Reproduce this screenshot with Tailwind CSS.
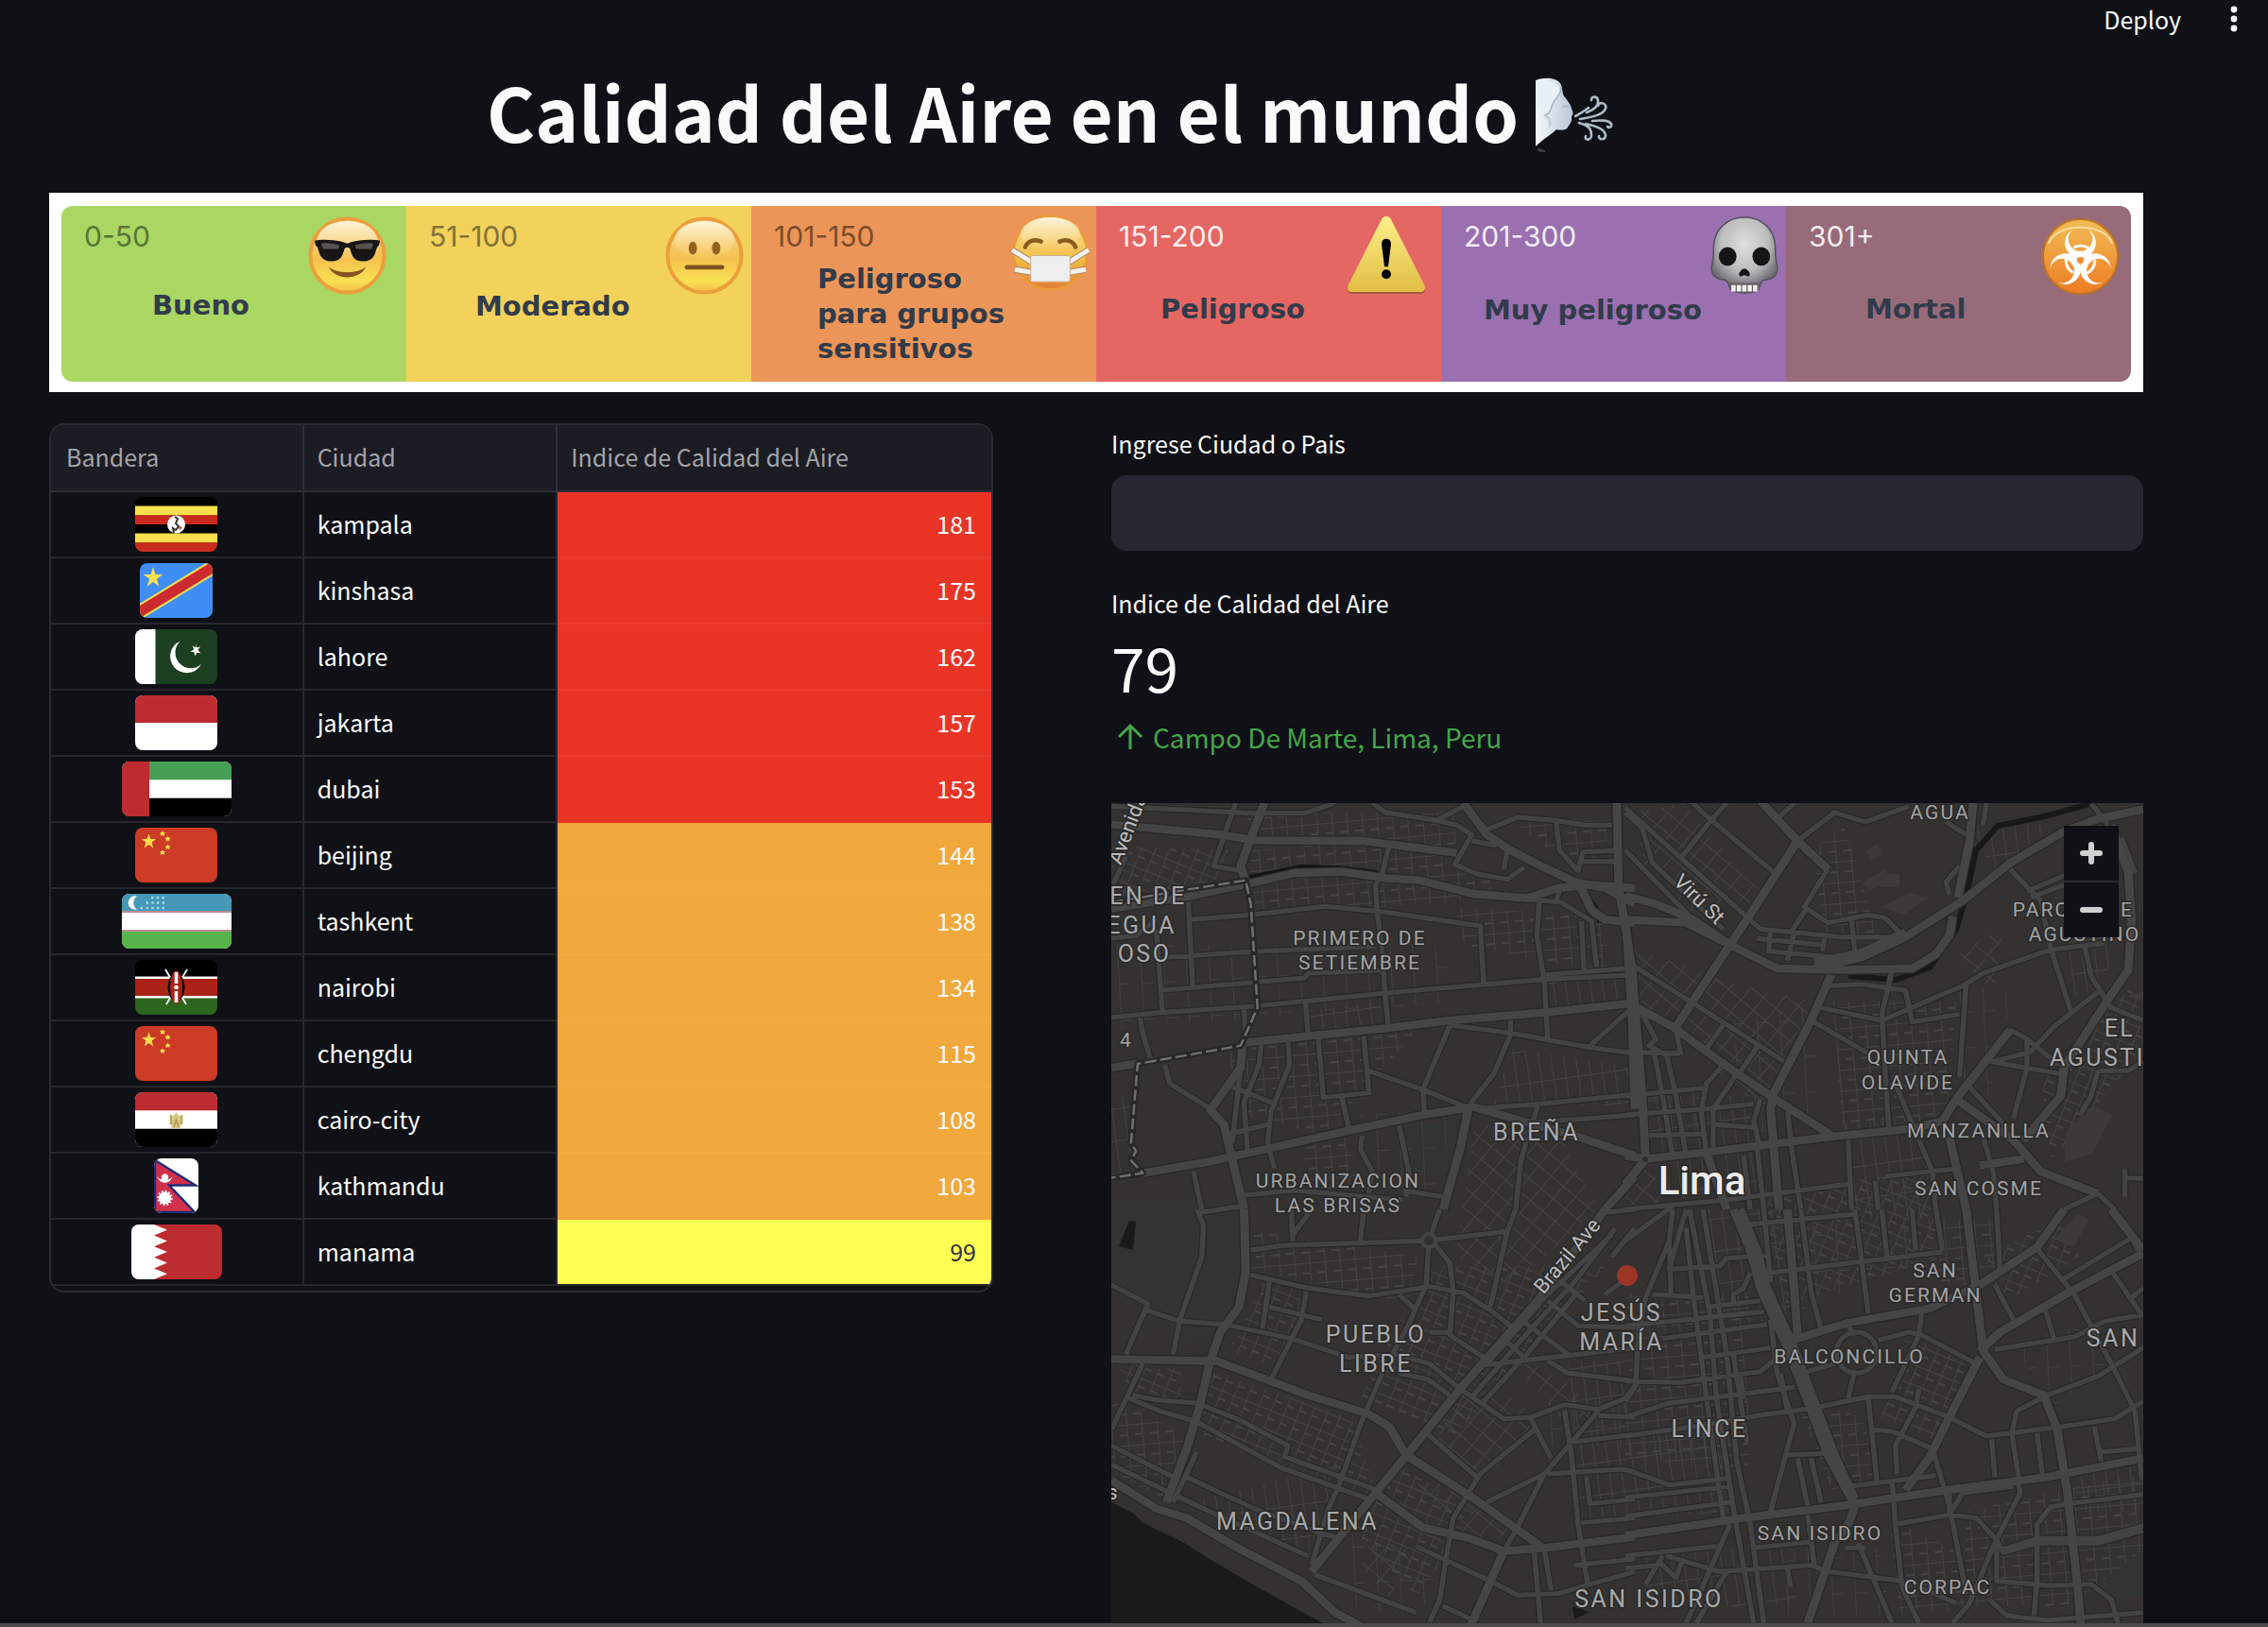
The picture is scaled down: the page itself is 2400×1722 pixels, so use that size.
<!DOCTYPE html>
<html lang="es">
<head>
<meta charset="utf-8">
<title>Calidad del Aire en el mundo</title>
<meta name="viewport" content="width=device-width, initial-scale=1">
<script src="https://cdn.jsdelivr.net/npm/@tailwindcss/browser@4"></script>
</head>
<body class="min-h-screen overflow-x-hidden border-b-4 border-[#4e494b] bg-[#0f1116] font-['Noto_Sans_CJK_SC','Noto_Sans',sans-serif] text-[25px] leading-[42px] text-[#fafafa]">

<header class="flex h-[42px] items-center justify-end gap-10 pr-5">
  <button type="button" class="pb-[3px]">Deploy</button>
  <button type="button" aria-label="Menú" class="flex w-8 justify-center">
    <svg class="h-8 w-2" viewBox="0 0 8 32" fill="#fafafa" aria-hidden="true"><circle cx="4" cy="5" r="3.4"/><circle cx="4" cy="15" r="3.4"/><circle cx="4" cy="25" r="3.4"/></svg>
  </button>
</header>

<main class="pl-[52px] pr-[132px]">
  <h1 class="flex h-[162px] items-center justify-center gap-[18px] pr-24 pb-3 text-[78px] leading-[110px] font-bold">
    <span>Calidad del Aire en el mundo</span>
    <svg class="mt-2 h-20 w-[84px]" viewBox="0 0 84 80" role="img" aria-label="Viento">
      <defs><linearGradient id="face" x1="0" x2="1"><stop offset="0" stop-color="#f4f8fc"/><stop offset="1" stop-color="#b9c6d4"/></linearGradient></defs>
      <path d="M0 4C10 0 24 1 27 9c2 6 1 10 4 13 3 4 6 7 7 12 2 4 2 6 0 8 1 6-2 8-4 12-2 3-8 3-12 2C16 62 8 66 0 74Z" fill="url(#face)"/>
      <path d="M0 5c14-4 25 2 26 11 0 8-8 9-10 16-2 6-3 8-6 10C5 38 4 34 0 34Z" fill="#e9eff6"/>
      <path d="M27 11c1 9-8 12-10 21-1 5-4 8-7 9 5 2 6 7 5 12M28 32c2-1 5-1 7 0" fill="none" stroke="#a9b6c4" stroke-width="1.600"/>
      <path d="M10 42c5 2 6 7 5 12" fill="none" stroke="#c4cfdb" stroke-width="2"/>
      <g fill="none" stroke="#aebcc8" stroke-width="2.600" stroke-linecap="round">
        <path d="M42 42c6-3 10-6 14-9M47 45c12-2 24-4 27-11 2-6-7-8-8-3"/>
        <path d="M54 38c8-3 13-7 12-13-1-5-8-4-7 0"/><path d="M46 49c10 3 13 6 13 13 0 6-8 6-6 1"/>
        <path d="M53 50c13 3 20 6 21 12 0 6-8 5-7 1"/><path d="M60 47c10-1 17-1 20 3 1 3-2 5-4 3"/>
      </g>
      <path d="M2 77l8 3" stroke="#3b4047" stroke-width="3"/>
    </svg>
  </h1>

  <section aria-label="Escala de calidad del aire" class="bg-white px-[13px] pt-[14px] pb-[11px] font-['DejaVu_Sans',sans-serif] text-[29px] leading-[37px] text-[#323b4a]">
    <ul class="grid h-[186px] grid-cols-6 overflow-hidden rounded-xl">
      <li class="relative bg-[#a9d762] pt-[75px] pl-24">
        <span class="absolute top-[14px] left-6 font-[Inter,sans-serif] text-[30px] text-[#5b7437]">0-50</span>
        <strong class="block pt-3">Bueno</strong>
        <svg class="absolute top-[11px] right-[21px] size-[83px]" viewBox="0 0 84 84" aria-hidden="true">
          <defs>
            <linearGradient id="em" x1="0" y1="0" x2="0" y2="1"><stop offset="0" stop-color="#f9dda0"/><stop offset=".55" stop-color="#f4c14d"/><stop offset=".85" stop-color="#f9e154"/><stop offset="1" stop-color="#f3bd45"/></linearGradient>
            <linearGradient id="gl" x1="0" y1="0" x2="0" y2="1"><stop offset="0" stop-color="#fff4dc"/><stop offset="1" stop-color="#f8d88a" stop-opacity=".1"/></linearGradient>
            <linearGradient id="sick" x1="0" y1="0" x2="0" y2="1"><stop offset="0" stop-color="#fbe3a4"/><stop offset=".6" stop-color="#f2bd43"/><stop offset="1" stop-color="#e27a31"/></linearGradient>
          </defs>
          <circle cx="42" cy="42" r="39.5" fill="url(#em)" stroke="#eb9e3c" stroke-width="4"/>
          <ellipse cx="42" cy="25" rx="32" ry="20" fill="url(#gl)"/>
          <path d="M7 26c10-2 24-1 35 3 11-4 25-5 35-3l-1 5c-2 1-3 4-4 8-2 7-8 10-15 9-7 0-10-5-12-13-1-2-5-2-6 0-2 8-5 13-12 13-7 1-13-2-15-9-1-4-2-7-4-8Z" fill="#171615"/>
          <path d="M14 29c7-1 14 0 20 2l-2 4H16ZM70 29c-7-1-14 0-20 2l2 4h16Z" fill="#555250"/>
          <path d="M22 54c8 8 32 8 40 0-6 15-34 15-40 0Z" fill="#885224"/>
        </svg>
      </li>
      <li class="relative bg-[#f2d25a] pt-[76px] pl-[73px]">
        <span class="absolute top-[14px] left-6 font-[Inter,sans-serif] text-[30px] text-[#83713a]">51-100</span>
        <strong class="block pt-3">Moderado</strong>
        <svg class="absolute top-[11px] right-2 size-[83px]" viewBox="0 0 84 84" aria-hidden="true">
          <circle cx="42" cy="42" r="39.5" fill="url(#em)" stroke="#eb9e3c" stroke-width="4"/>
          <ellipse cx="42" cy="25" rx="32" ry="20" fill="url(#gl)"/>
          <ellipse cx="29.500" cy="34" rx="4.500" ry="7" fill="#96611f"/><ellipse cx="54.500" cy="34" rx="4.500" ry="7" fill="#96611f"/>
          <rect x="21" y="52" width="42" height="5" rx="2" fill="#7d531d"/>
        </svg>
      </li>
      <li class="relative bg-[#ec9558] pt-[59px] pl-[70px]">
        <span class="absolute top-[14px] left-6 font-[Inter,sans-serif] text-[30px] text-[#7c4d2a]">101-150</span>
        <strong class="block">Peligroso<br>para grupos<br>sensitivos</strong>
        <svg class="absolute top-2 right-[7px] size-[83px]" viewBox="0 0 84 84" aria-hidden="true">
          <circle cx="42" cy="42" r="39.500" fill="url(#sick)" stroke="#eb9a3a" stroke-width="3"/>
          <ellipse cx="42" cy="22" rx="32" ry="18" fill="url(#gl)"/>
          <path d="M15 36c3-7 10-9 17-6M69 36c-3-7-10-9-17-6" fill="none" stroke="#8a5a20" stroke-width="4.500" stroke-linecap="round"/>
          <path d="M1 39l21 13M83 39L62 52M4 60l18 3M80 60l-18 3" stroke="#a98762" stroke-width="7"/>
          <path d="M1 39l21 13M83 39L62 52M4 60l18 3M80 60l-18 3" stroke="#f5f1ef" stroke-width="5"/>
          <rect x="21" y="45" width="42" height="28" rx="2" fill="#f0eff0" stroke="#cfae93"/>
        </svg>
      </li>
      <li class="relative bg-[#e56764] pt-[79px] pl-[68px]">
        <span class="absolute top-[14px] left-6 font-[Inter,sans-serif] text-[30px] text-[#fdeeee]">151-200</span>
        <strong class="block pt-3">Peligroso</strong>
        <svg class="absolute top-[11px] right-4 h-[83px] w-[84px]" viewBox="0 0 84 84" aria-hidden="true">
          <defs><linearGradient id="wr" x1="0" y1="0" x2="0" y2="1"><stop offset="0" stop-color="#fbf08a"/><stop offset="1" stop-color="#e2bd44"/></linearGradient></defs>
          <path d="M37 4c2-4 8-4 10 0l36 73c1 3 0 6-4 6H5c-4 0-5-3-4-6Z" fill="#a9563f"/>
          <path d="M37 3c2-4 8-4 10 0l36 71c1 4 0 7-4 7H5c-4 0-5-3-4-7Z" fill="url(#wr)"/>
          <path d="M42 24c4 0 5 3 5 6l-3 24h-4l-3-24c0-3 1-6 5-6Z"/><circle cx="42" cy="62" r="5"/>
        </svg>
      </li>
      <li class="relative bg-[#9a70b1] pt-20 pl-[45px]">
        <span class="absolute top-[14px] left-6 font-[Inter,sans-serif] text-[30px] text-[#f3edf7]">201-300</span>
        <strong class="block pt-3">Muy peligroso</strong>
        <svg class="absolute top-[11px] right-2 h-[83px] w-[72px]" viewBox="0 0 72 84" aria-hidden="true">
          <defs><radialGradient id="sk" cx=".5" cy=".35" r=".6"><stop offset="0" stop-color="#dedede"/><stop offset=".6" stop-color="#bdbdbd"/><stop offset="1" stop-color="#6b6870"/></radialGradient></defs>
          <path d="M36 1C55 1 68 14 69 32c0 8 0 14 2 21 1 7-2 12-8 14-6 1-9 1-10 6-1 6-7 9-17 9s-16-3-17-9c-1-5-4-5-10-6-6-2-9-7-8-14 2-7 2-13 2-21C4 14 17 1 36 1Z" fill="url(#sk)" stroke="#55525a" stroke-width="1.500"/>
          <ellipse cx="18" cy="43" rx="9.500" ry="10" fill="#151515"/><ellipse cx="54" cy="43" rx="9.500" ry="10" fill="#151515"/>
          <path d="M36 56c5 1 7 7 5 8-2 1-3-1-5-1s-3 2-5 1c-2-1 0-7 5-8Z" fill="#151515"/>
          <path d="M20 75h32" stroke="#66636a" stroke-width="8"/><path d="M22 77h28" stroke="#f4f3ee" stroke-width="7" stroke-dasharray="4.500 1.300"/>
        </svg>
      </li>
      <li class="relative bg-[#976b79] pt-[79px] pl-[84px]">
        <span class="absolute top-[14px] left-6 font-[Inter,sans-serif] text-[30px] text-[#f3ecee]">301+</span>
        <strong class="block pt-3">Mortal</strong>
        <svg class="absolute top-3 right-3 size-[83px]" viewBox="0 0 84 84" aria-hidden="true">
          <defs><linearGradient id="bio" x1="0" y1="0" x2="0" y2="1"><stop offset="0" stop-color="#f1bd56"/><stop offset="1" stop-color="#ee7b23"/></linearGradient></defs>
          <circle cx="42" cy="42" r="40" fill="url(#bio)" stroke="#bd7423" stroke-width="2"/>
          <path d="M8 28C16 5 68 5 76 28" fill="none" stroke="#f8e0a6" stroke-width="2"/>
          <g fill="#fff">
            <path id="arm" d="M34 13A16.500 16.500 0 1 0 50 13 13 13 0 1 1 34 13Z"/>
            <use href="#arm" transform="rotate(120 42 46)"/><use href="#arm" transform="rotate(240 42 46)"/>
          </g>
          <circle cx="42" cy="46" r="15.500" fill="none" stroke="#fff" stroke-width="3" stroke-dasharray="17 15.450" stroke-dashoffset="0"/>
          <circle cx="42" cy="46" r="3.500" fill="#ef8f33"/>
        </svg>
      </li>
    </ul>
  </section>

  <div class="mt-[33px] grid grid-cols-[999fr_1092fr] items-start gap-[125px]">
    <div class="overflow-hidden rounded-2xl border-2 border-[#2a2b31] pb-[5px]">
      <table class="w-full table-fixed border-collapse">
        <colgroup><col class="w-[26.8%]"><col class="w-[27%]"><col class="w-[46.2%]"></colgroup>
        <thead class="bg-[#1b1c24] text-left text-[#a3a4a8]">
          <tr class="h-[70px] border-b-2 border-[#2e3036]">
            <th scope="col" class="border-r-2 border-[#2e3036] pb-[3px] pl-4 font-normal">Bandera</th>
            <th scope="col" class="border-r-2 border-[#2e3036] pb-[3px] pl-[14px] font-normal">Ciudad</th>
            <th scope="col" class="pb-[3px] pl-[14px] font-normal">Indice de Calidad del Aire</th>
          </tr>
        </thead>
        <tbody>
          <tr class="h-[70px] border-b-2 border-[#26282e]">
            <td class="border-r-2 border-[#26282e]"><svg class="mx-auto h-[58px] w-[87px] rounded-lg" viewBox="0 0 87 58" role="img" aria-label="Uganda"><rect width="87" height="58" fill="#000"/><path d="M0 14.500h87M0 43.500h87" stroke="#f9df4e" stroke-width="10"/><path d="M0 24.200h87M0 53.200h87" stroke="#c92c1f" stroke-width="9.700"/><circle cx="43.500" cy="29" r="9.500" fill="#fff"/><path d="M42 21l3 2-2 5 3 3-3 4-3-2 1 5" stroke="#333" stroke-width="2" fill="none"/><path d="M46 31l4 1-3 3" fill="#c92c1f"/></svg></td>
            <td class="border-r-2 border-[#26282e] pb-[3px] pl-[14px]">kampala</td>
            <td class="border-b-2 border-[#eb3b2d] bg-[#ea3426] pr-4 pb-[3px] text-right">181</td>
          </tr>
          <tr class="h-[70px] border-b-2 border-[#26282e]">
            <td class="border-r-2 border-[#26282e]"><svg class="mx-auto h-[58px] w-[77px] rounded-lg" viewBox="0 0 77 58" role="img" aria-label="R. D. del Congo"><rect width="77" height="58" fill="#3f8ef7"/><path d="M-4 54L81 2" stroke="#f8e04d" stroke-width="15"/><path d="M-4 54L81 2" stroke="#cb2b2f" stroke-width="11"/><path d="M14 4l2.400 8h8l-6.500 4.700 2.500 8L14 20l-6.400 4.700 2.500-8L3.600 12h8Z" fill="#f8e04d"/></svg></td>
            <td class="border-r-2 border-[#26282e] pb-[3px] pl-[14px]">kinshasa</td>
            <td class="border-b-2 border-[#eb3b2d] bg-[#ea3426] pr-4 pb-[3px] text-right">175</td>
          </tr>
          <tr class="h-[70px] border-b-2 border-[#26282e]">
            <td class="border-r-2 border-[#26282e]"><svg class="mx-auto h-[58px] w-[87px] rounded-lg" viewBox="0 0 87 58" role="img" aria-label="Pakistán"><rect width="87" height="58" fill="#1b3f20"/><rect width="21.500" height="58" fill="#fff"/><path d="M48 12.500A17.500 17.500 0 1 0 70 37 16 16 0 0 1 48 12.500Z" fill="#fff"/><path d="M64 15.500l1 4 4-1-2.600 3.500 3 3.200-4-.5-2 3.500-1-4-4-.7 3.800-2-1.500-4 3.300 2Z" fill="#fff"/></svg></td>
            <td class="border-r-2 border-[#26282e] pb-[3px] pl-[14px]">lahore</td>
            <td class="border-b-2 border-[#eb3b2d] bg-[#ea3426] pr-4 pb-[3px] text-right">162</td>
          </tr>
          <tr class="h-[70px] border-b-2 border-[#26282e]">
            <td class="border-r-2 border-[#26282e]"><svg class="mx-auto h-[58px] w-[87px] rounded-lg" viewBox="0 0 87 58" role="img" aria-label="Indonesia"><rect width="87" height="58" fill="#fff"/><rect width="87" height="29" fill="#bd2c31"/></svg></td>
            <td class="border-r-2 border-[#26282e] pb-[3px] pl-[14px]">jakarta</td>
            <td class="border-b-2 border-[#eb3b2d] bg-[#ea3426] pr-4 pb-[3px] text-right">157</td>
          </tr>
          <tr class="h-[70px] border-b-2 border-[#26282e]">
            <td class="border-r-2 border-[#26282e]"><svg class="mx-auto h-[58px] w-[116px] rounded-lg" viewBox="0 0 116 58" role="img" aria-label="Emiratos Árabes Unidos"><rect width="116" height="58" fill="#fff"/><rect width="116" height="19.300" fill="#479e55"/><rect y="38.700" width="116" height="19.300"/><rect width="29" height="58" fill="#bd2c31"/></svg></td>
            <td class="border-r-2 border-[#26282e] pb-[3px] pl-[14px]">dubai</td>
            <td class="border-b-2 border-[#ea3426] bg-[#ea3426] pr-4 pb-[3px] text-right">153</td>
          </tr>
          <tr class="h-[70px] border-b-2 border-[#26282e]">
            <td class="border-r-2 border-[#26282e]"><svg class="mx-auto h-[58px] w-[87px] rounded-lg" viewBox="0 0 87 58" role="img" aria-label="China"><g id="china"><rect width="87" height="58" fill="#cc3b26"/><g fill="#f8dc4a"><path d="M14.500 6.500l2 5.500h5.700l-4.600 3.600 1.700 5.800-4.800-3.500-4.800 3.500 1.700-5.800L6.800 12h5.700Z"/><path d="M29 3.500l1 1.500 2 .3-1.200 1.400.2 2-2-.8-2 .8.200-2L26 5.300l2-.3ZM34.600 9l1 1.500 2 .3-1.200 1.400.2 2-2-.8-2 .8.200-2-1.200-1.400 2-.3ZM34.600 17.700l1 1.500 2 .3-1.200 1.400.2 2-2-.8-2 .8.200-2-1.200-1.400 2-.3ZM29 23.500l1 1.500 2 .3-1.200 1.400.2 2-2-.8-2 .8.200-2-1.200-1.400 2-.3Z"/></g></g></svg></td>
            <td class="border-r-2 border-[#26282e] pb-[3px] pl-[14px]">beijing</td>
            <td class="border-b-2 border-[#f1ac44] bg-[#f1a83c] pr-4 pb-[3px] text-right">144</td>
          </tr>
          <tr class="h-[70px] border-b-2 border-[#26282e]">
            <td class="border-r-2 border-[#26282e]"><svg class="mx-auto h-[58px] w-[116px] rounded-lg" viewBox="0 0 116 58" role="img" aria-label="Uzbekistán"><rect width="116" height="58" fill="#fff"/><rect width="116" height="18" fill="#4599b7"/><rect y="40" width="116" height="18" fill="#57b34c"/><path d="M0 19h116M0 39h116" stroke="#a8656b" stroke-width="1.500"/><path d="M16 2.500a7.300 7.300 0 1 0 0 14 8.500 8.500 0 0 1 0-14Z" fill="#fff"/><path d="M31 4h14M25.500 9.500H45M19.700 15H45" stroke="#a8d8e8" stroke-width="2.400" stroke-dasharray="2.400 3.300"/></svg></td>
            <td class="border-r-2 border-[#26282e] pb-[3px] pl-[14px]">tashkent</td>
            <td class="border-b-2 border-[#f1ac44] bg-[#f1a83c] pr-4 pb-[3px] text-right">138</td>
          </tr>
          <tr class="h-[70px] border-b-2 border-[#26282e]">
            <td class="border-r-2 border-[#26282e]"><svg class="mx-auto h-[58px] w-[87px] rounded-lg" viewBox="0 0 87 58" role="img" aria-label="Kenia"><rect width="87" height="58" fill="#000"/><rect y="40" width="87" height="18" fill="#2c651d"/><rect y="17.500" width="87" height="23" fill="#fff"/><rect y="20" width="87" height="18" fill="#ab2317"/><path d="M33 47L55 10M54 47L32 10" stroke="#fff" stroke-width="1.800"/><ellipse cx="43.500" cy="29" rx="9" ry="15" fill="#000"/><ellipse cx="43.500" cy="29" rx="6.500" ry="17.500" fill="#ab2317"/><path d="M43.500 13v12M43.500 33v12" stroke="#fff" stroke-width="3.500"/><circle cx="43.500" cy="29" r="2.300" fill="#fff"/></svg></td>
            <td class="border-r-2 border-[#26282e] pb-[3px] pl-[14px]">nairobi</td>
            <td class="border-b-2 border-[#f1ac44] bg-[#f1a83c] pr-4 pb-[3px] text-right">134</td>
          </tr>
          <tr class="h-[70px] border-b-2 border-[#26282e]">
            <td class="border-r-2 border-[#26282e]"><svg class="mx-auto h-[58px] w-[87px] rounded-lg" viewBox="0 0 87 58" role="img" aria-label="China"><use href="#china"/></svg></td>
            <td class="border-r-2 border-[#26282e] pb-[3px] pl-[14px]">chengdu</td>
            <td class="border-b-2 border-[#f1ac44] bg-[#f1a83c] pr-4 pb-[3px] text-right">115</td>
          </tr>
          <tr class="h-[70px] border-b-2 border-[#26282e]">
            <td class="border-r-2 border-[#26282e]"><svg class="mx-auto h-[58px] w-[87px] rounded-lg" viewBox="0 0 87 58" role="img" aria-label="Egipto"><rect width="87" height="58" fill="#fff"/><rect width="87" height="19.300" fill="#bd2c31"/><rect y="38.700" width="87" height="19.300"/><path d="M36.500 23l4 2 3-4 3 4 4-2v11l-3 1 1 3H38l1-3-2.500-1Z" fill="#d8c98a"/><path d="M38 25v9M49 25v9M41 37l2.500-8 2.500 8" stroke="#b59b45" stroke-width="1.500" fill="none"/></svg></td>
            <td class="border-r-2 border-[#26282e] pb-[3px] pl-[14px]">cairo-city</td>
            <td class="border-b-2 border-[#f1ac44] bg-[#f1a83c] pr-4 pb-[3px] text-right">108</td>
          </tr>
          <tr class="h-[70px] border-b-2 border-[#26282e]">
            <td class="border-r-2 border-[#26282e]"><svg class="mx-auto h-[58px] w-[47px] rounded-lg" viewBox="0 0 47 58" role="img" aria-label="Nepal"><rect width="47" height="58" fill="#fff"/><path d="M1 2L44 28.500H16L43 57H1Z" fill="#d0304a" stroke="#1d2c7a" stroke-width="2.400"/><path d="M3.500 19c2 9 14 9 16 0-3 4-4 3-5 3a3.600 3.600 0 1 0-6 0c-2 0-3 0-5-3Z" fill="#fff"/><circle cx="11.500" cy="42" r="6.500" fill="#fff"/><circle cx="11.500" cy="42" r="7" fill="none" stroke="#fff" stroke-width="2.500" stroke-dasharray="1.800 1.860"/></svg></td>
            <td class="border-r-2 border-[#26282e] pb-[3px] pl-[14px]">kathmandu</td>
            <td class="border-b-2 border-[#f1a83c] bg-[#f1a83c] pr-4 pb-[3px] text-right">103</td>
          </tr>
          <tr class="h-[70px] border-b-2 border-[#26282e]">
            <td class="border-r-2 border-[#26282e]"><svg class="mx-auto h-[58px] w-24 rounded-lg" viewBox="0 0 96 58" role="img" aria-label="Baréin"><rect width="96" height="58" fill="#bd2c31"/><path d="M0 0H24L38 5.800 24 11.600 38 17.400 24 23.200 38 29 24 34.800 38 40.600 24 46.400 38 52.200 24 58H0Z" fill="#fff"/></svg></td>
            <td class="border-r-2 border-[#26282e] pb-[3px] pl-[14px]">manama</td>
            <td class="bg-[#ffff54] pr-4 pb-[3px] text-right text-[#31333f]">99</td>
          </tr>
        </tbody>
      </table>
    </div>

    <div>
      <label for="lugar" class="block">Ingrese Ciudad o Pais</label>
      <input id="lugar" type="text" class="mt-[13px] block h-20 w-full rounded-2xl bg-[#262730] px-6 outline-none">
      <div class="mt-[34px]">Indice de Calidad del Aire</div>
      <div class="mt-1 text-[64px] leading-[84px]">79</div>
      <div class="mt-3 flex items-center gap-2 pl-1 text-[28px] text-[#45a649]">
        <svg class="size-8" viewBox="0 0 32 32" fill="none" stroke="currentColor" stroke-width="3" aria-hidden="true"><path d="M16 29V4M4 16L16 4l12 12"/></svg>
        <span>Campo De Marte, Lima, Peru</span>
      </div>

      <div class="relative mt-[49px] h-[868px] overflow-hidden bg-[#333231]">
        <svg class="size-full font-[Roboto,sans-serif]" viewBox="1176 850 1092 868" preserveAspectRatio="xMidYMid slice" role="img" aria-label="Mapa de Lima">
          <defs>
            <!-- local street textures -->
            <pattern id="s1" width="16" height="22" patternUnits="userSpaceOnUse" patternTransform="rotate(-5)"><path d="M0 0H16M0 0V22M8 11H16" fill="none" stroke="#444443" stroke-width="1.800"/></pattern>
            <pattern id="s2" width="14" height="20" patternUnits="userSpaceOnUse" patternTransform="rotate(22)"><path d="M0 0H14M0 0V20M0 9H8" fill="none" stroke="#444443" stroke-width="1.800"/></pattern>
            <pattern id="s3" width="17" height="17" patternUnits="userSpaceOnUse" patternTransform="rotate(40)"><path d="M0 0H17M0 0V17" fill="none" stroke="#444443" stroke-width="1.800"/></pattern>
            <pattern id="s4" width="13" height="34" patternUnits="userSpaceOnUse" patternTransform="rotate(-8)"><path d="M0 0H13M0 0V34" fill="none" stroke="#444443" stroke-width="1.800"/></pattern>
            <pattern id="s5" width="24" height="38" patternUnits="userSpaceOnUse" patternTransform="rotate(-3)"><path d="M0 0V38M0 0H12" fill="none" stroke="#414140" stroke-width="1.800"/></pattern>
            <!-- avenues, one block per map tile -->
            <g id="wide">
              <path transform="translate(1170 840) scale(.3571 .3333)" d="M17 98L340 130 440 148 760 150 1040 188M17 365L250 325 440 282 560 252 700 248 830 268 930 275 1090 318 1250 332 1340 300 1440 290 1568 300M1060 30L1130 130 1200 180 1300 235 1390 280 1480 300 1568 350M1515 30L1520 300 1545 450 1560 720 1568 1000M415 790L620 768 830 745 1020 720 1300 695 1568 665M17 870L90 858M110 1205L300 1170 490 1125 720 1070 940 1020 1090 995 1250 1045 1400 1090 1568 1150M405 800L400 870 310 1005 350 1050 375 1160 410 1320M1480 1320L1568 1215M1075 1000L1050 1130 1000 1320M470 30L430 140 400 230 415 280M1400 280L1440 370 1480 400 1568 410"/>
              <path transform="translate(1720 840) scale(.3571 .3333)" d="M0 420L20 560 30 700 50 960 60 1160M0 325L90 350 200 400 310 480 450 555 650 560 850 555 920 510 960 450 970 390M0 400L180 410 310 480M560 555L700 520 830 455 1000 340 1140 220 1300 120 1400 80 1534 50M560 535L700 505 830 440M1030 30L1020 150 985 330M380 0L510 150 600 240M510 150L360 400 310 480 150 740M610 575L550 720 440 950 430 1000 455 1320M0 660L140 740 280 850 430 960 610 1085M0 1150L60 1160 230 1140 600 1090 840 1065 940 1040 980 970 1140 750M980 970L1150 1100 1230 1200 1400 1270M1180 1100L1290 960 1300 870 1420 670 1490 560 1500 400 1490 250 1440 100M960 1090L1010 1320M1050 1180L1180 1160M0 1240L60 1160M240 1140L300 1320"/>
              <path transform="translate(1170 1280) scale(.3571 .3333)" d="M410 0L415 200 395 310 340 390 310 480 280 620 240 760 180 930M17 475L330 482 600 590 780 650 840 690 890 780 1080 910 1290 1070M1480 0L1280 290 1050 570 900 770 800 900 610 1150M800 900L940 1010 1080 1045 1180 1085 1300 1075 1568 1040M17 860L150 950 240 980 400 1080 580 1180 680 1280 760 1326M1180 1085L1080 1326"/>
              <path transform="translate(1720 1280) scale(.3571 .3333)" d="M320 0L370 130 400 250 480 440 600 780 680 940 665 990 620 1060 540 1314M340 0L390 130 420 250 500 440 620 780 680 920M480 0L500 250 510 400M1010 0L1060 450 1120 540 1240 590 1280 700 1310 900 1340 1200 1350 1326M480 420L660 360 900 315 1050 240 1220 120 1300 0M1050 450L1110 390 1320 260 1534 140M1440 0L1534 130M0 1035L350 980 650 940 960 890 1250 850 1534 790M1050 470L960 660 900 790 830 890"/>
            </g>
            <g id="mid">
              <path transform="translate(1170 840) scale(.3571 .3333)" d="M385 30L320 230 400 245M17 40L430 62 590 62 680 30M790 30L830 60 980 85 1060 40M840 165L820 250 800 290 805 380 820 500 828 640 838 740M980 85L1040 100 1085 130 1035 225 1100 255 1190 272 1240 235M1085 150L1160 165M1190 180L1180 240M1130 115L1220 75 1330 85 1420 100 1500 100M1335 90L1345 180 1400 245 1415 185 1515 180M1415 215H1515M250 400L430 385 650 358 820 375 1110 420 1120 600M170 520L390 505 460 500 800 485M160 625L590 585 600 570 820 560M17 710L160 695 440 675 840 632 1290 590 1568 575M245 345L258 610M150 430L168 690M100 700L110 760 135 850M175 860L190 920 310 1000M410 685L415 770M592 660L600 765M1285 345L1278 450 1300 600 1310 780M1250 335L1350 345 1440 405 1455 550M1410 405L1418 570M1300 575L1540 555M1335 340L1345 310M630 775L645 965 780 950 765 770M700 965L720 1060M540 790L545 860 490 1010 480 1110 500 1190M460 795L455 860 410 980 420 1130M400 870L375 1110M375 930L500 985M370 1080L480 1050M1020 735L940 940 945 1015M1020 735L1200 760 1430 805 1568 825M1200 720V765L1150 890 1080 985M780 880L940 940 1080 1000M1430 805L1550 690M1110 1000L1290 985 1568 955M1280 990L1265 1045 1568 1020M1250 1090L1230 1170 1215 1320M870 1055L900 1210 890 1280M760 1085L755 1130 790 1200 780 1270M260 1200L285 1320M880 1260L1000 1280M410 1275L560 1260 880 1290M17 460L90 450 150 400M17 300L60 200"/>
              <path transform="translate(1720 840) scale(.3571 .3333)" d="M0 60L50 110 80 220 150 290 290 430M510 150L620 60 710 90 840 40M300 30L250 90 160 210M170 0L250 80 440 250M0 45L160 200 400 430 640 455 820 455M0 180L100 290 200 400M600 240L530 360 600 410 720 385 770 395 820 450M500 30L450 80M390 460L580 480M430 430L425 500 620 520M500 440L480 530M590 455L585 500M670 400L680 500M540 360L490 440M0 530L200 665 470 850M290 735L240 810M390 805L330 900M600 610L700 605 830 625 850 725 990 700M580 680L760 720 1000 610 1060 570 1260 495 1420 475M550 720L720 825M790 560L760 700 780 1060M1010 600L990 900M1140 750L1190 780 1260 840M1380 30L1430 100M1140 240L1230 340 1260 490 1320 690M1360 480L1380 580 1440 680 1534 720M1190 310L1300 260M1200 330L1300 290M950 90L1010 130M1060 100L1070 30M1080 850L1290 890M1190 780L1190 870 1150 1030M1400 880L1380 960 1350 1015M1400 880H1490L1534 850M1400 630L1270 740 1200 820 1090 850M1010 920L1130 1060M870 1100L910 1200 920 1320M770 1215L990 1190M660 1100L670 1320M0 1320L300 1290 660 1240M490 1110L520 1320M390 1120L410 1320M350 1150L370 1320M0 820L160 825M0 960L230 935M0 1020L250 1000 380 985M70 1085L230 1080M85 820L110 960 140 1150M120 820L150 960 180 1150M150 750L165 830M300 850L240 920 225 1010 240 1140M330 890L260 1000 260 1130M400 970L380 1040 400 1130M260 1050L380 1060M480 1000L490 1100M40 680L90 780 70 800 120 830M800 920L850 1050M740 1230L750 1320M1060 1090L1090 1200 1100 1320M1400 1270L1450 1320M1400 1270L1300 1320M1480 1190V1280M1485 1220L1534 1222M960 320L950 280 990 230M1510 250L1470 140"/>
              <path transform="translate(1170 1280) scale(.3571 .3333)" d="M270 0L290 50 285 150 220 350 200 460M280 10L400-10M430 130L520 115 950 100 1190 70 1215 0M555 100L550 0M755 100L765 0M610 0L555 80M958 100L990 0M958 100L950 240 900 360 850 460M975 110L1020 170 1030 260 1020 400 1120 470M430 208L600 250 780 275 960 245 1060 265 1140 320 1200 370M1190 70L1140 310M17 240L125 300 60 460M120 320L220 355 350 365 550 410 720 470 860 460 960 490 1050 570M485 230L465 380M595 260L580 350 490 540M485 310L640 350M870 270L920 320M960 390H1020M110 490L17 700M80 590L150 605 270 615 400 670 540 750 530 785 800 890M70 600L160 640 270 675 520 820 780 920M820 520L760 670 690 880 660 950 610 1130M17 750L200 850M17 810L190 900M240 850L440 950 640 1030M210 910L330 970 600 1100M270 770L200 930M620 1160L920 1280M640 1030L680 1040M870 520L955 540 1020 590M950 710L1100 850M1050 570L1120 620 1180 665 1260 660 1360 620 1460 635 1540 600 1568 560M1260 665L1320 790M1270 700L1110 840 1030 980 1010 1100 990 1240 960 1310M1130 930L1300 840 1460 640M1300 840L1220 1010 1180 1085M1310 840L1530 825 1568 835M1360 640L1380 780 1400 1000 1430 1200M1370 740L1568 715M1425 850L1435 935 1568 920M1410 995L1568 980M1270 1090L1290 1326M1300 1080L1320 1210M920 1070L1140 1180 1220 1225 1340 1220 1568 1150M1390 1130L1568 1110M1130 490L1310 270 1500 80M1090 590L1260 380 1390 230 1510 60M1120 610L1240 470 1400 260M1180 410L1240 470M1230 350L1370 460M1310 290L1400 370 1568 375M1350 230L1420 290M1110 495L1568 440M1310 480L1370 520 1568 545M1480 270L1568 200M1500 150L1568 60M1480 10L1568 0M1460 655L1568 660M1000 1260L1080 1300"/>
              <path transform="translate(1720 1280) scale(.3571 .3333)" d="M140 0L130 100 60 280 40 380 30 560 0 610M190 0L250 330 270 600 320 950 380 1314M230 0L300 460 330 800 370 1000 410 1314M180 60L200 260 240 600 290 980M410 0L430 230M520 0L550 260 580 380M340 50L680 15M680 0L720 330M760 0L775 150M850 0L860 130M920 0L940 130M400 205L940 135M1100 0L1110 190M0 100L140-10M180 0L130 190 280 180 300 155 430 145M370 200L350 250 320 270V300M80 270L230 280M240 310L400 290M0 370L410 325M110 410L420 365M230 470L430 440M0 545L160 550 400 515 440 480M0 660L130 615 500 565M0 720L200 690 420 650M360 660L560 630 720 595 800 595 960 660 1070 720 1290 690 1450 665 1534 610M430 350L450 520 500 680 430 960M460 520L480 640M660 370L680 400M750 415L840 390 880 400 1040 490M880 310L870 400 790 580M680 510L660 600M520 520L620 490M720 600L745 860M730 700L790 705 910 760 960 940 1010 1220M870 570L860 630 800 750 805 840M480 780L590 775M510 790L540 940M550 790L580 930M1095 445L1330 405 1420 355 1534 335M1220 125L1330 270 1440 490 1510 640 1530 860M1250 590L1400 530 1534 440M1300 220L1500 90 1520 130M1245 320L1270 410M1095 240L1150 350M1440 195L1534 340M1500 280L1534 250M1240 595L1160 640 1145 710 1165 850M1085 730L1095 850M1220 710L1235 840M1390 690L1410 800M1410 770L1520 760M0 825L130 875 300 855M0 915L310 880M0 975L310 930M0 1100L270 1070M0 1140L90 1130M120 1100L280 1150 550 1130 600 1150 820 1180M110 1100L60 1190M100 1120L150 1170 170 1110M310 1000L240 1170 180 1314M300 1150L210 1314M380 1075L560 1055M540 970L560 1130M690 1060L790 1314M650 1075H710M660 880L920 845M790 860L800 1000 820 1200 870 1314M800 1000L960 970 1040 980 1100 1050 1120 1090 1220 1060 1400 1060 1534 1020M1120 1080L1220 1045 1400 1045 1534 1005M960 890V970L1000 900 1150 880M1165 870L1170 900 1090 1070 1020 1250 970 1314M1100 1060V1180L1260 1195 1380 1190 1440 1240 1460 1314M1310 935L1260 945 1220 1000 1220 1180 1210 1290M1310 935L1534 905M870 1200L980 1250M1080 1240L1130 1290 1250 1305 1534 1280M480 1140L490 1200M340 520L350 600M130 100L135 270M320 460L360 740M625 455a60 65 0 1 0 120 0a60 65 0 1 0-120 0"/>
            </g>
          </defs>
          <path d="M1176 850H2268V1718H1176Z" fill="#333231"/>
          <path d="M1176 1270H1318V1390L1260 1420 1176 1360ZM1480 1190H1540V1240H1480ZM2175 1470L2250 1445 2256 1495 2186 1500ZM2226 1640H2268V1690H2226Z" fill="#323432"/>
          <path fill="url(#s2)" d="M1176 895L1300 900 1290 930 1176 960ZM1510 1340H1700L1540 1520 1440 1480ZM1276 1450L1430 1500 1460 1590 1270 1520ZM1480 1550L1560 1600 1500 1690 1430 1620ZM2160 1140L2260 1040 2268 1110 2170 1230ZM1860 1260L2040 1240 2060 1330 1890 1380ZM2020 1400L2080 1440 2060 1530 1990 1500ZM1340 1350L1380 1360 1360 1450 1300 1430ZM2100 1330L2180 1290 2200 1330 2120 1380ZM1180 1440L1250 1450V1480H1200Z"/>
          <path fill="url(#s1)" d="M1320 860H1540V912L1320 890ZM1320 900L1460 895 1590 930 1590 950 1330 970ZM1540 960L1700 970V1030L1550 1000ZM1300 1110L1500 1090 1400 1200 1310 1180ZM1310 1300L1500 1330 1490 1380 1310 1340ZM1920 900L1950 870 1990 1000 1930 990ZM1940 1060L2070 1060 2060 1180 1950 1200ZM1720 1370H1850V1560L1720 1540ZM1900 1480L1970 1500 1990 1570 1940 1580ZM2170 1580L2268 1560V1640L2190 1700H2080V1600ZM2040 1290H2110V1360H2050ZM1176 1480L1260 1520 1240 1590 1176 1560ZM1590 860L1700 870V920L1640 900ZM1380 1200L1420 1190 1440 1260H1380ZM2000 1610L2070 1640 2090 1700 2010 1710Z"/>
          <path fill="url(#s3)" d="M1560 1190L1650 1200 1690 1280 1600 1360 1540 1330ZM1720 1000L1830 1040 1920 1060 1870 1180 1740 1070ZM1540 1450L1600 1480 1640 1510 1560 1570 1520 1530ZM1790 880L1860 940 1850 960 1780 900ZM2070 1010L2120 980 2110 1050ZM1590 1430L1640 1450 1700 1500 1650 1500ZM1730 860L1780 850 1840 920 1800 990 1740 920ZM1500 1570L1540 1560 1600 1620 1560 1640ZM1450 1630L1500 1640 1470 1690 1440 1660ZM1720 1230H1750L1760 1280H1720Z"/>
          <path fill="url(#s4)" d="M1600 1110L1730 1130V1170L1580 1170ZM1630 1040L1730 1030V1070L1640 1070ZM1380 1070L1460 1060V1095L1390 1090ZM1260 1590L1420 1550 1400 1640 1340 1630ZM1660 1530L1830 1510V1600L1670 1610ZM1660 1440H1720V1550H1670ZM1950 1190L2040 1180V1290L1960 1290ZM2190 1560L2268 1550V1600H2190ZM2190 960L2240 1000 2220 1060 2190 1050ZM2080 880L2170 870 2120 930ZM1740 1160H1860V1260H1760ZM1800 1280H1900V1400H1830ZM1176 1160H1200V1230L1176 1260ZM1860 1640H1900V1700H1870ZM1740 1640H1850V1700H1740Z"/>
          <path fill="url(#s5)" d="M1176 1000H1540V1060L1176 1090ZM1440 1180L1540 1170 1520 1260 1450 1250ZM2060 1040L2130 1050 2100 1180 2070 1150ZM1890 1300L2020 1290V1340L1900 1390ZM2130 1420L2230 1400 2240 1450 2170 1490ZM1420 1620L1530 1660 1500 1710 1430 1700ZM1890 1620L1990 1640 2000 1710H1890ZM1640 1480H1720V1530H1640ZM1830 1080L1930 1060 1920 1190 1880 1190ZM1830 1100L1870 1130 1900 1190 1860 1200ZM1740 1200H1800V1150H1740Z"/>
          <path fill="#3b3a38" d="M1975 900l12-8 4 12-10 6ZM1970 935l24-15 6 10-20 12ZM1990 925h20v14h-20ZM2185 1200l30-30 20 10-20 40-30 10ZM2175 1310l25-25 10 6-15 28ZM2250 1055l18-6v10ZM1990 960l30-15 20 5-25 18Z"/>
          <path d="M1176 1590L1200 1602 1210 1612 1255 1634 1278 1649 1324 1676 1367 1700 1400 1718H1176ZM1195 1292L1202 1293 1199 1323 1184 1319ZM1664 1700L1682 1706 1666 1714Z" fill="#191a1a"/>
          <path d="M1322 928L1377 917 1416 918 1458 923M1690 975L1708 970M1675 940L1690 962" fill="none" stroke="#151515" stroke-width="4"/>
          <path d="M2214 850L2164 864 2114 874 2091 900 2081 947 2070 984 2042 1024 2006 1037 1956 1033" fill="none" stroke="#171817" stroke-width="6"/>
          <g fill="none" stroke-linejoin="round">
            <use href="#mid" stroke="#292929" stroke-width="22"/>
            <use href="#wide" stroke="#292929" stroke-width="33"/>
            <use href="#mid" stroke="#434343" stroke-width="15"/>
            <use href="#wide" stroke="#454545" stroke-width="25"/>
          </g>
          <circle cx="1512" cy="1313" r="7" fill="#333231" stroke="#454545" stroke-width="4"/><circle cx="1741" cy="1227" r="3" fill="#2b2b2b"/>
          <g fill="none" stroke-linejoin="round" transform="translate(1170 840) scale(.3571 .3333)">
            <path d="M17 345L240 305 415 275 430 350 450 680 400 800 95 858 75 1110 90 1135 75 1165 110 1205 17 1220" stroke="#282828" stroke-width="20"/>
            <path d="M17 345L240 305 415 275 430 350 450 680 400 800 95 858 75 1110 90 1135 75 1165 110 1205 17 1220" stroke="#707070" stroke-width="7" stroke-dasharray="34 12"/>
          </g>
          <circle cx="1722" cy="1350" r="11" fill="#9b3526"/>
          <!-- place names -->
          <g class="tracking-widest" fill="#a3a3a3" stroke="#2a2a2a" stroke-width="3" paint-order="stroke" text-anchor="middle" font-size="21">
            <text x="2053" y="867">AGUA</text>
            <text x="1439" y="1000">PRIMERO DE</text><text x="1439" y="1026">SETIEMBRE</text>
            <text x="1416" y="1257">URBANIZACION</text><text x="1416" y="1283">LAS BRISAS</text>
            <text x="2194" y="970">PARQUE DE</text><text x="2206" y="996">AGUSTINO</text>
            <text x="2019" y="1126">QUINTA</text><text x="2019" y="1153">OLAVIDE</text>
            <text x="2094" y="1204">MANZANILLA</text><text x="2094" y="1265">SAN COSME</text>
            <text x="2048" y="1352">SAN</text><text x="2048" y="1378">GERMAN</text>
            <text x="1957" y="1443">BALCONCILLO</text><text x="1926" y="1630">SAN ISIDRO</text><text x="2061" y="1687">CORPAC</text>
            <text x="1192" y="1108">4</text>
          </g>
          <g class="tracking-widest" fill="#a9a9a9" stroke="#2a2a2a" stroke-width="3" paint-order="stroke" text-anchor="middle" font-size="25">
            <text x="1215" y="957">EN DE</text><text x="1208" y="988">EGUA</text><text x="1211" y="1018">OSO</text>
            <text x="1626" y="1207">BREÑA</text><text x="2243" y="1097">EL</text><text x="2169" y="1128" text-anchor="start">AGUSTINO</text>
            <text x="1456" y="1421">PUEBLO</text><text x="1456" y="1452">LIBRE</text>
            <text x="1716" y="1398">JESÚS</text><text x="1716" y="1429">MARÍA</text>
            <text x="2236" y="1425">SAN</text><text x="1809" y="1521">LINCE</text>
            <text x="1373" y="1619">MAGDALENA</text><text x="1745" y="1701">SAN ISIDRO</text>
          </g>
          <g fill="#bdbdbd" stroke="#2a2a2a" stroke-width="3" paint-order="stroke" text-anchor="middle" font-size="22">
            <text transform="translate(1200 880) rotate(-69)">Avenida</text>
            <text transform="translate(1793 957) rotate(44)">Virú St</text>
            <text transform="translate(1664 1334) rotate(-50)">Brazil Ave</text>
            <text x="1177" y="1587">s</text>
            <text x="1801" y="1264" font-size="42" font-weight="500" fill="#ececec">Lima</text>
          </g>
        </svg>
        <div class="absolute top-6 right-[26px] flex w-[58px] flex-col divide-y-2 divide-[#2a2c31] bg-[#0f1116]">
          <button type="button" aria-label="Acercar" class="flex h-[60px] items-center justify-center"><svg class="size-6" viewBox="0 0 24 24" stroke="#d0d0d0" stroke-width="6" stroke-linecap="round" aria-hidden="true"><path d="M3 12H21M12 3V21"/></svg></button>
          <button type="button" aria-label="Alejar" class="flex h-[58px] items-center justify-center"><svg class="size-6" viewBox="0 0 24 24" stroke="#d0d0d0" stroke-width="6" stroke-linecap="round" aria-hidden="true"><path d="M3 12H21"/></svg></button>
        </div>
      </div>
    </div>
  </div>
</main>
</body>
</html>
